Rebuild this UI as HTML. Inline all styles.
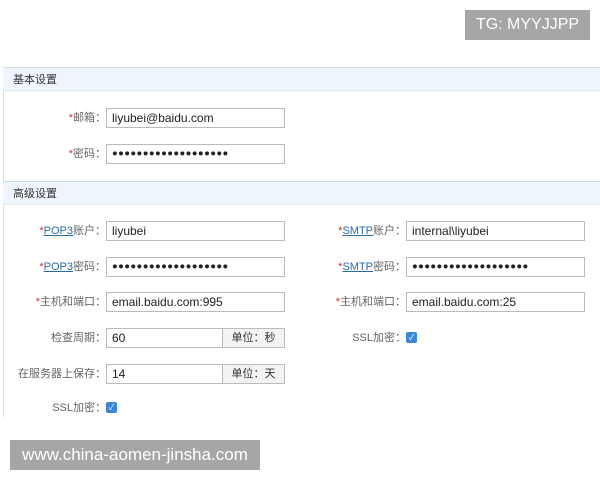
<!DOCTYPE html>
<html><head><meta charset="utf-8"><style>
body{margin:0;width:600px;height:480px;background:#fff;position:relative;overflow:hidden;font-family:"Liberation Sans","Noto Sans CJK SC",sans-serif}
.a{position:absolute}
.hd{position:absolute;left:3px;right:0;height:24px;background:#eff5fc;border-top:1px solid #cfdbe6;border-bottom:1px solid #e1e8ee;font-size:11px;color:#333;line-height:24px;padding-left:10px;box-sizing:border-box}
.lb{position:absolute;width:200px;text-align:right;font-size:11px;color:#666;line-height:20px}
.lb i{font-style:normal;color:#c33}
.lb u{color:#2b6aa6}
.in{position:absolute;width:179px;height:20px;border:1px solid #bbb;box-sizing:border-box;font-size:12px;color:#222;line-height:18px;padding-left:5px;background:#fff}
.dots{letter-spacing:0.4px;font-size:9.5px;font-weight:bold}
.un{position:absolute;width:63px;height:20px;border:1px solid #bbb;box-sizing:border-box;background:#f3f3f3;font-size:11px;color:#333;line-height:18px;text-align:center}
.cb{position:absolute;width:11px;height:11px;background:#3b87d6;border-radius:2px;color:#fff;font-size:8px;line-height:11px;text-align:center}
.wm{position:absolute;background:#a6a6a6;color:#fff;font-size:16px;text-align:center}
</style></head><body>
<div class="a" style="left:3px;top:67px;width:1px;height:350px;background:#d6e0ea"></div>
<div class="hd" style="top:67px">基本设置</div>
<div class="hd" style="top:181px">高级设置</div>

<div class="lb" style="left:-94px;top:108px"><i>*</i>邮箱：</div>
<div class="in" style="left:106px;top:108px">liyubei@baidu.com</div>
<div class="lb" style="left:-94px;top:144px"><i>*</i>密码：</div>
<div class="in dots" style="left:106px;top:144px">●●●●●●●●●●●●●●●●●●●</div>

<div class="lb" style="left:-94px;top:221px"><i>*</i><u>POP3</u>账户：</div>
<div class="in" style="left:106px;top:221px">liyubei</div>
<div class="lb" style="left:-94px;top:257px"><i>*</i><u>POP3</u>密码：</div>
<div class="in dots" style="left:106px;top:257px">●●●●●●●●●●●●●●●●●●●</div>
<div class="lb" style="left:-94px;top:292px"><i>*</i>主机和端口：</div>
<div class="in" style="left:106px;top:292px">email.baidu.com:995</div>
<div class="lb" style="left:-94px;top:328px">检查周期：</div>
<div class="in" style="left:106px;top:328px">60</div>
<div class="un" style="left:222px;top:328px">单位：秒</div>
<div class="lb" style="left:-94px;top:364px">在服务器上保存：</div>
<div class="in" style="left:106px;top:364px">14</div>
<div class="un" style="left:222px;top:364px">单位：天</div>
<div class="lb" style="left:-94px;top:398px">SSL加密：</div>
<div class="cb" style="left:106px;top:402px">✓</div>

<div class="lb" style="left:206px;top:221px"><i>*</i><u>SMTP</u>账户：</div>
<div class="in" style="left:406px;top:221px">internal\liyubei</div>
<div class="lb" style="left:206px;top:257px"><i>*</i><u>SMTP</u>密码：</div>
<div class="in dots" style="left:406px;top:257px">●●●●●●●●●●●●●●●●●●●</div>
<div class="lb" style="left:206px;top:292px"><i>*</i>主机和端口：</div>
<div class="in" style="left:406px;top:292px">email.baidu.com:25</div>
<div class="lb" style="left:206px;top:328px">SSL加密：</div>
<div class="cb" style="left:406px;top:332px">✓</div>

<div class="wm" style="left:465px;top:10px;width:125px;height:30px;line-height:30px">TG: MYYJJPP</div>
<div class="wm" style="left:10px;top:440px;width:250px;height:30px;line-height:30px;font-size:17px">www.china-aomen-jinsha.com</div>
</body></html>
